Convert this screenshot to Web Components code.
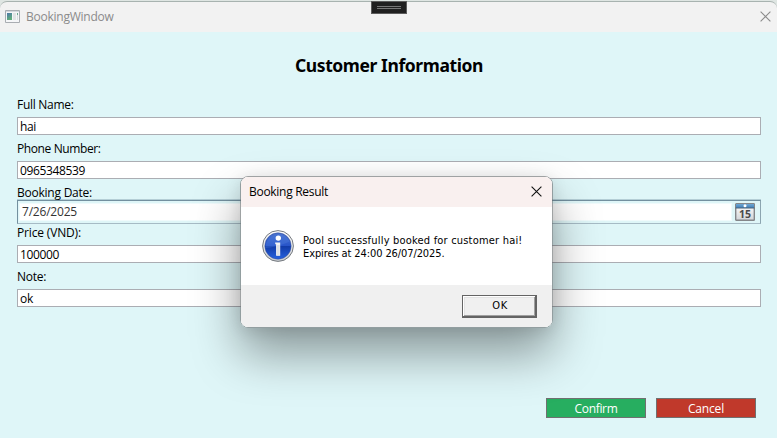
<!DOCTYPE html>
<html lang="en"><head><meta charset="utf-8"><title>BookingWindow</title>
<style>
html,body{margin:0;height:100%;overflow:hidden}
body{font:12px/16px "Open Sans","Noto Sans",sans-serif;color:#000}
</style></head><body>
<booking-window></booking-window>
<script>
const define=(name,html,setup)=>customElements.define(name,class extends HTMLElement{
  connectedCallback(){
    if(this.shadowRoot)return;
    this.attachShadow({mode:'open'}).innerHTML=html;
    if(setup)setup(this,this.shadowRoot);
  }
});

// A single line of text tracked to a fixed advance width.
define('tracked-text',`<style>:host{display:inline-block;white-space:pre}span{display:inline-block}</style><span></span>`,(el,root)=>{
  const s=root.querySelector('span'),t=el.getAttribute('text');
  s.textContent=t;
  const w=+el.getAttribute('width');
  s.style.letterSpacing=((w-s.getBoundingClientRect().width)/t.length)+'px';
});

define('close-icon',`<style>:host{display:block;width:11px;height:11px}svg{display:block}</style>
<svg width="11" height="11" viewBox="0 0 11 11"><path d="M.6.6 10.4 10.4M10.4.6.6 10.4" fill="none" stroke="currentColor" stroke-width="1.1"/></svg>`);

define('title-bar',`<style>
:host{display:flex;align-items:center;box-sizing:border-box;height:31px;background:#f2f2f2;color:#8b8b8b;border-top:1px solid #a8b3b0;border-radius:7px 7px 0 0;padding:0 6px 0 5px;margin-top:1px}
.app{display:block;margin-right:6px;margin-top:-1px}
tracked-text{flex:1;line-height:18px}
close-icon{color:#8a8a8a;margin-top:-2px}
</style>
<svg class="app" width="15" height="13" viewBox="0 0 15 13"><defs><linearGradient id="g" x2="0.4" y2="1"><stop stop-color="#4d78a8"/><stop offset="1" stop-color="#61ae7c"/></linearGradient></defs>
<path d="M.5.5h14v12H.5z" fill="#f5f6f8" stroke="#a9adb2"/><path d="M1 1h13v1H1z" fill="#d4d8dd"/><path d="M2 3h5v7H2z" fill="url(#g)"/><path d="M8 3h3v7H8z" fill="#e2e3e5"/><path d="M12 3h1v2h-1z" fill="#6fa98f"/><path d="M12 5h1v5h-1z" fill="#dadde0"/></svg>
<tracked-text text="BookingWindow" width="87.5"></tracked-text><close-icon></close-icon>`);

define('debug-grip',`<style>
:host{position:absolute;left:371px;top:1px;box-sizing:border-box;width:36px;height:13px;background:#202020;border:1px solid #5c5c5c;display:flex;flex-direction:column;gap:1px;align-items:center;padding-top:4px}
i{width:24px;height:1px;background:#777}
</style><i></i><i></i>`);

define('form-field',`<style>
:host{display:block}
.label{height:16px;margin-bottom:4px}
.box{box-sizing:border-box;height:18px;border:1px solid #abadb3;background:#fff;padding:0 2px;display:flex;line-height:17px}
tracked-text{display:block}
</style><div class="label"></div><div class="box"></div>`,(el,root)=>{
  const a=n=>el.getAttribute(n);
  root.querySelector('.label').innerHTML=`<tracked-text text="${a('label')}" width="${a('lw')}"></tracked-text>`;
  root.querySelector('.box').innerHTML=`<tracked-text text="${a('value')}" width="${a('vw')}"></tracked-text>`;
});

define('calendar-icon',`<style>:host{display:block}svg{display:block}text{font:bold 11px "Noto Sans",sans-serif;fill:#4a4a4a}</style>
<svg width="20" height="18" viewBox="0 0 20 18"><defs><linearGradient id="p" x2="0" y2="1"><stop stop-color="#fff"/><stop offset="1" stop-color="#d3d5d8"/></linearGradient><linearGradient id="b" x2="0" y2="1"><stop stop-color="#6fa6d2"/><stop offset="1" stop-color="#3f7fb9"/></linearGradient></defs>
<rect x=".7" y=".7" width="18.6" height="16.6" rx=".6" fill="url(#p)" stroke="#848689" stroke-width="1.4"/><path d="M1 1h18v4H1z" fill="url(#b)"/><path d="M.5 5h19" stroke="#4d657b"/><circle cx="10" cy="2.8" r="1.5" fill="#fff"/><text x="4" y="15.3" textLength="12" lengthAdjust="spacingAndGlyphs">15</text></svg>`);

define('date-field',`<style>
:host{display:block}
.label{height:16px;margin-bottom:-1px}
.box{box-sizing:border-box;height:24px;border:1px solid;border-color:#73909f #8ca5b0 #a6bbc5 #73909f;background:#dff6f8;display:flex;align-items:center;padding:1px 5px 1px 1px;box-shadow:0 -1px #b4ced6}
.value{flex:1;height:18px;background:#fff;border:1px solid #f0fbfc;box-sizing:border-box;color:#333;padding-left:2px;line-height:16px;margin-right:3px}
</style><div class="label"><tracked-text text="Booking Date:" width="75"></tracked-text></div>
<div class="box"><div class="value"><tracked-text text="7/26/2025" width="55"></tracked-text></div><calendar-icon></calendar-icon></div>`);

define('action-button',`<style>
:host{display:flex;justify-content:center;box-sizing:border-box;width:100px;height:20px;border:1px solid #707070;color:#fff;line-height:19px}
:host([kind=confirm]){background:#27ae60}:host([kind=cancel]){background:#c0392b}
</style><slot></slot>`);

define('info-icon',`<style>:host{display:block;width:32px;height:32px}svg{display:block}</style>
<svg width="32" height="32" viewBox="0 0 32 32"><defs><linearGradient id="o" x2="0" y2="1"><stop stop-color="#4a72cc"/><stop offset=".48" stop-color="#2855c9"/><stop offset=".52" stop-color="#123ca9"/><stop offset="1" stop-color="#2560dc"/></linearGradient><linearGradient id="r" x2="0" y2="1"><stop stop-color="#fff"/><stop offset="1" stop-color="#c9cdd2"/></linearGradient></defs>
<circle cx="16" cy="16" r="15.4" fill="url(#r)" stroke="#777b80" stroke-width="1"/><circle cx="16" cy="16" r="13.2" fill="#173ea9" stroke="#687aaf" stroke-width=".6"/><circle cx="16" cy="16" r="12.7" fill="url(#o)"/><path d="M3.5 18Q13 18 28 11.5A13 13 0 0 0 3.5 18" fill="#5483e4" opacity=".3"/>
<circle cx="16.3" cy="8.1" r="2.7" fill="#fff"/><path d="M13.2 12.5h5v13.3h-4.1V14.3h-.9z" fill="#f3f3f2"/><path d="M15 15h2.6v10.3H15z" fill="#dce0e5"/></svg>`);

define('ok-button',`<style>
:host{box-sizing:border-box;width:75px;height:23px;border:1px solid #646464;border-right-width:2px;border-bottom-width:2px;background:#f0f0f0;box-shadow:inset 1px 1px #fff,inset -1px -1px #a0a0a0,inset 2px 2px #e3e3e3;display:flex;justify-content:center;line-height:20px;padding-left:2px}
</style><slot></slot>`);

define('message-dialog',`<style>
:host{position:absolute;left:240px;top:176px;box-sizing:border-box;width:313px;height:152px;border:1px solid rgba(95,100,102,.6);background-clip:padding-box;border-radius:8px;box-shadow:0 26px 48px rgba(0,0,0,.38),0 2px 16px rgba(0,0,0,.1)}
.in{height:100%;border-radius:7px;overflow:hidden;display:flex;flex-direction:column;background:#fff}
header{height:30px;background:#f9f0ef;display:flex;justify-content:space-between;padding:0 10px 0 8px;line-height:30px}
close-icon{margin-top:9px;color:#111}
main{flex:1;display:flex;padding:23px 0 0 21px;gap:9px}
.msg,ok-button{font-family:"DejaVu Sans Condensed","DejaVu Sans",sans-serif;font-size:11px;font-stretch:condensed}
.msg{line-height:13px;padding-top:4px}
.msg tracked-text{display:block}
footer{height:42px;background:#f0f0f0;display:flex;justify-content:flex-end;padding:10px 15px 0 0;box-sizing:border-box}
</style><div class="in"><header><tracked-text text="Booking Result" width="79"></tracked-text><close-icon></close-icon></header>
<main><info-icon></info-icon><div class="msg"><tracked-text text="Pool successfully booked for customer hai!" width="219.5"></tracked-text><tracked-text text="Expires at 24:00 26/07/2025." width="141.5"></tracked-text></div></main>
<footer><ok-button><tracked-text text="OK" width="15.5"></tracked-text></ok-button></footer></div>`);

define('booking-window',`<style>
:host{display:flex;flex-direction:column;position:relative;box-sizing:border-box;width:777px;height:438px;background:#dfe6e3;overflow:hidden}
.content{flex:1;background:#dff6f8;box-sizing:border-box;padding:22px 16px 20px 17px;display:flex;flex-direction:column}
h1{font:bold 17.5px/23px "Noto Sans",sans-serif;margin:0 0 20px;text-align:center}
.actions{margin-top:auto;padding-right:5px;display:flex;justify-content:flex-end;gap:10px}
form-field{margin-bottom:6px}
date-field{margin-bottom:1px}
</style><title-bar></title-bar><div class="content"><h1><tracked-text text="Customer Information" width="188"></tracked-text></h1>
<form-field label="Full Name:" lw="56.5" value="hai" vw="16"></form-field>
<form-field label="Phone Number:" lw="83.5" value="0965348539" vw="65"></form-field>
<date-field></date-field>
<form-field label="Price (VND):" lw="64" value="100000" vw="39"></form-field>
<form-field label="Note:" lw="29" value="ok" vw="13"></form-field>
<div class="actions"><action-button kind="confirm"><tracked-text text="Confirm" width="43"></tracked-text></action-button><action-button kind="cancel"><tracked-text text="Cancel" width="36"></tracked-text></action-button></div></div>
<debug-grip></debug-grip><message-dialog></message-dialog>`);
</script></body></html>
